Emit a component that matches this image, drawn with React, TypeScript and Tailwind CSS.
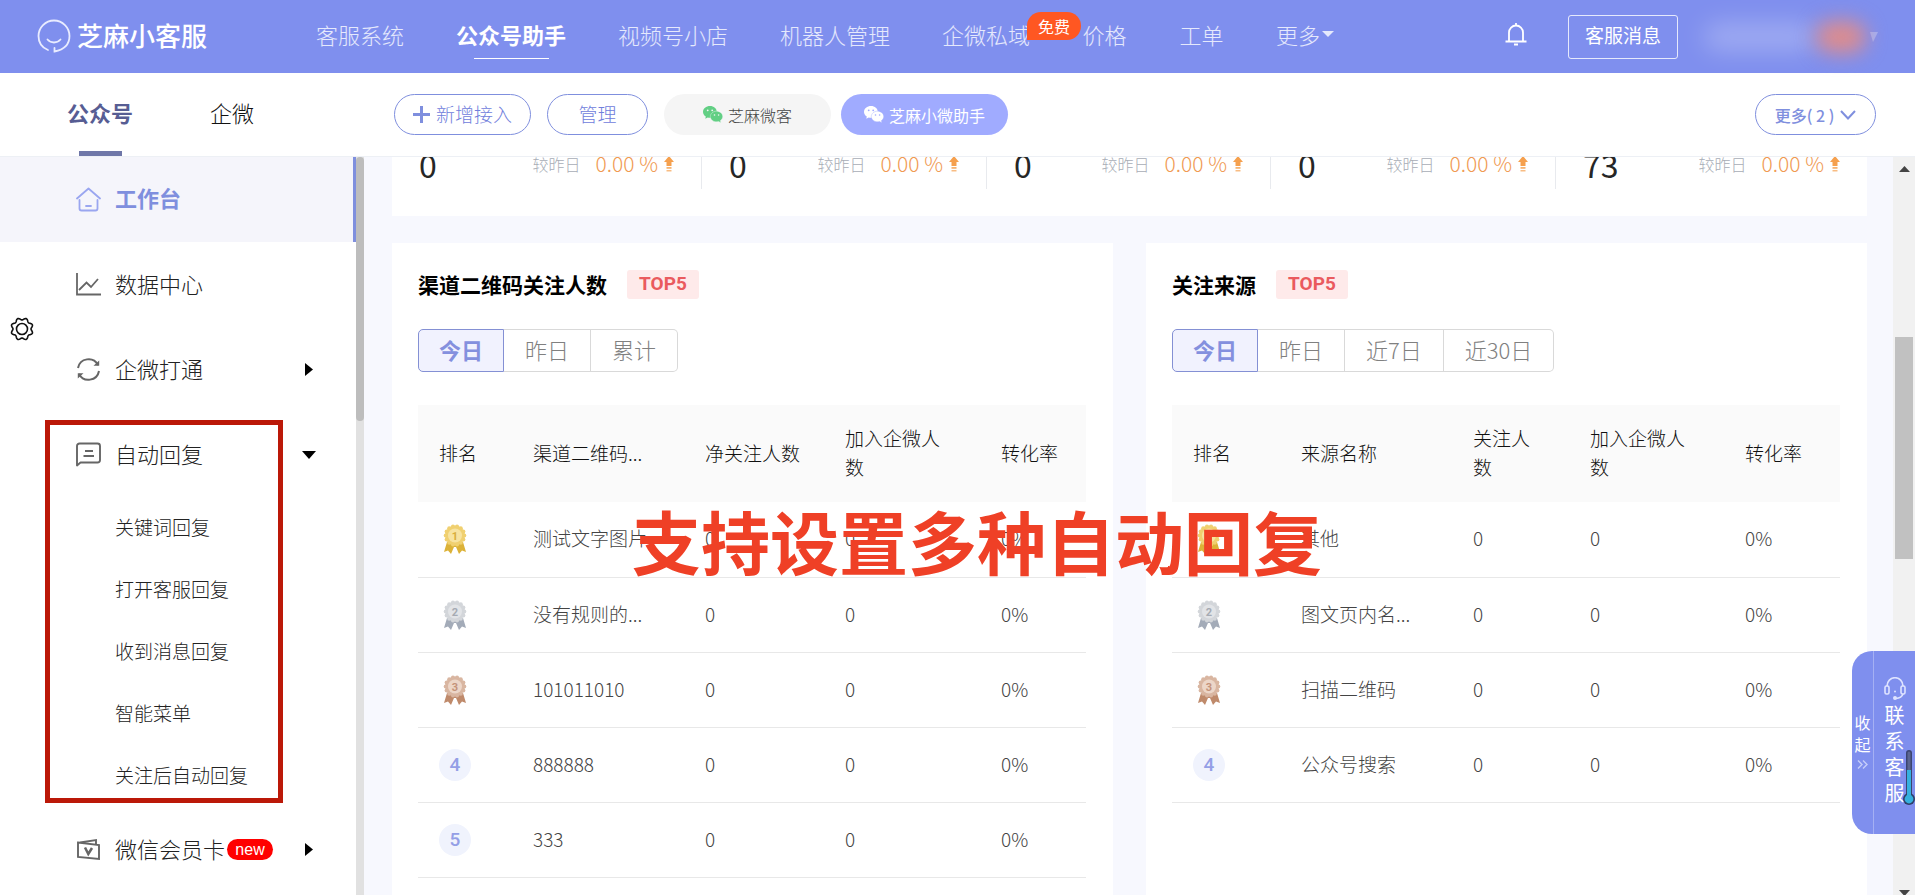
import type { ReactNode } from "react";
import clsx from "clsx";

type Row = { rank: number; name: string };

const NAV = [
  { label: "客服系统", width: "w-[140px]" },
  { label: "公众号助手", width: "w-[162px]", active: true },
  { label: "视频号小店", width: "w-[162px]" },
  { label: "机器人管理", width: "w-[162px]" },
  { label: "企微私域", width: "w-[140px]", badge: "免费" },
  { label: "价格", width: "w-[97px]" },
  { label: "工单", width: "w-[97px]" },
];

const REPLY_MENU = ["关键词回复", "打开客服回复", "收到消息回复", "智能菜单", "关注后自动回复"];

const STATS = ["0", "0", "0", "0", "73"];

const CHANNEL_ROWS: Row[] = [
  { rank: 1, name: "测试文字图片" },
  { rank: 2, name: "没有规则的..." },
  { rank: 3, name: "101011010" },
  { rank: 4, name: "888888" },
  { rank: 5, name: "333" },
];

const SOURCE_ROWS: Row[] = [
  { rank: 1, name: "其他" },
  { rank: 2, name: "图文页内名..." },
  { rank: 3, name: "扫描二维码" },
  { rank: 4, name: "公众号搜索" },
];

// rosette, inner disc, ribbon, digit
const MEDAL = [
  ["#f0d070", "#f7e3a0", "#dcb238", "#d8ae3c"],
  ["#d3d6da", "#e2e4e7", "#a3abb8", "#a6abb3"],
  ["#d9b6a1", "#ecd6c8", "#bf8a6b", "#c4937a"],
];

// eight rounded teeth, with a notch at the top
const GEAR_OUTLINE = Array.from({ length: 96 }, (_, i) => {
  const a = (i * Math.PI) / 48;
  const r = 10.1 - 1.1 * Math.cos(8 * a);
  return `${(12 + r * Math.cos(a)).toFixed(2)},${(12 + r * Math.sin(a)).toFixed(2)}`;
}).join(" ");

function LogoIcon() {
  return (
    <svg width="34" height="34" viewBox="0 0 34 34" fill="none" stroke="#e9ecff" strokeWidth="1.8" strokeLinecap="round">
      <path d="M11 31C5 28.600 1.500 23.500 1.500 17a15.500 15.500 0 1 1 31 0c0 8-5 13.500-15 15.500v-3.500" />
      <path d="M10.500 20.500c3.500 4 9.500 4 13 0" />
    </svg>
  );
}

function BellIcon() {
  return (
    <svg width="22" height="23" viewBox="0 0 22 23" fill="none" stroke="#fff" strokeWidth="1.8">
      <path d="M4 18.500V9.500a7 7 0 0 1 14 0v9M0.500 18.500h21M11 0v2.500M9 21.500h4" />
    </svg>
  );
}

function HomeIcon() {
  return (
    <svg width="25" height="25" viewBox="0 0 25 25" fill="none" stroke="#9aa6f0" strokeWidth="1.8" strokeLinecap="round" strokeLinejoin="round">
      <path d="M1 11.500 12.500 1.500 24 11.500M3.500 13v8.500a2 2 0 0 0 2 2h14a2 2 0 0 0 2-2V13M10 19h5" />
    </svg>
  );
}

function ChartIcon() {
  return (
    <svg width="25" height="23" viewBox="0 0 25 23" fill="none" stroke="#666" strokeWidth="1.8">
      <path d="M1 0v21.500h24M3 17l7.500-7.500 4.500 4.500 7-8" />
    </svg>
  );
}

function SyncIcon() {
  return (
    <svg width="25" height="25" viewBox="0 0 25 25" fill="none" stroke="#666" strokeWidth="2">
      <path d="M2 11A10.700 10.700 0 0 1 22 8M23 14a10.700 10.700 0 0 1-20 3" />
      <path d="M17.500 8.800h5.700V3.500zM7.500 16.200H1.800v5.300z" fill="#666" stroke="none" />
    </svg>
  );
}

function ChatIcon() {
  return (
    <svg width="25" height="25" viewBox="0 0 25 25" fill="none" stroke="#666" strokeWidth="1.9" strokeLinejoin="round">
      <path d="M1 23.500V4a2.500 2.500 0 0 1 2.500-2.500h18A2.500 2.500 0 0 1 24 4v14a2.500 2.500 0 0 1-2.500 2.500h-17zM9 9h8M7.500 14h10.500" />
    </svg>
  );
}

function CardIcon() {
  return (
    <svg width="25" height="23" viewBox="0 0 25 23" fill="none" stroke="#666" strokeWidth="1.9">
      <path d="M2 4.500 23 7v14L2 19zM4 4.500 20 2v4" />
      <path d="m9 9.500 3.300 6.500L16 10" strokeWidth="2.500" />
    </svg>
  );
}

function GearIcon() {
  return (
    <svg width="24" height="24" viewBox="0 0 24 24" fill="none" stroke="#111" strokeWidth="1.6" strokeLinejoin="round">
      <polygon points={GEAR_OUTLINE} />
      <circle cx="12" cy="12" r="5.500" />
    </svg>
  );
}

function WechatIcon({ color, eye }: { color: string; eye: string }) {
  return (
    <svg width="20" height="17" viewBox="0 0 20 17">
      <path d="M7 0c3.800 0 6.800 2.600 6.800 5.900 0 3.200-3 5.800-6.800 5.800-.8 0-1.600-.1-2.300-.3L2.300 12.800l.5-2.300C1.100 9.400 0 7.800 0 5.900 0 2.600 3.200 0 7 0z" fill={color} />
      <path d="M13.500 5.200c3.400 0 6.200 2.400 6.200 5.300 0 1.700-.9 3.100-2.300 4.100l.4 2.100-2.200-1.200c-.7.200-1.400.3-2.100.3-3.400 0-6.200-2.400-6.200-5.300s2.800-5.300 6.200-5.300z" fill={color} stroke={eye} strokeWidth=".4" />
      <g fill={eye}>
        <circle cx="4.700" cy="4.300" r=".9" />
        <circle cx="9.200" cy="4.300" r=".9" />
        <circle cx="11.500" cy="9" r=".8" />
        <circle cx="15.600" cy="9" r=".8" />
      </g>
    </svg>
  );
}

function TrendIcon() {
  return (
    <svg width="10" height="16" viewBox="0 0 10 16" fill="#f5a04e">
      <path d="M5 0 10 6H7.500v4h-5V6H0z" />
      <path d="M2.500 11h5v1.800h-5z" opacity=".8" />
      <path d="M2.500 14h5v1.500h-5z" opacity=".7" />
    </svg>
  );
}

function HeadsetIcon() {
  return (
    <svg width="22" height="23" viewBox="0 0 22 23" fill="none" stroke="#dfe4ff" strokeWidth="1.6">
      <path d="M3 9a8 8.300 0 0 1 16 0M19 17c-1 3-3 4.200-7 4.500" />
      <rect x="1" y="9" width="4" height="8" rx="1.500" />
      <rect x="17" y="9" width="4" height="8" rx="1.500" />
      <circle cx="11" cy="21" r="1.200" fill="#dfe4ff" />
      <circle cx="11" cy="14.500" r="1" fill="#dfe4ff" stroke="none" />
    </svg>
  );
}

function Thermometer() {
  return (
    <svg width="12" height="56" viewBox="0 0 12 56">
      <rect x="3" y="0" width="6" height="48" rx="3" fill="#3b4470" />
      <rect x="4.500" y="1.500" width="3" height="20" rx="1.500" fill="#5c6690" />
      <circle cx="6" cy="49" r="6" fill="#2f3f68" />
      <rect x="4" y="20" width="4" height="28" fill="#35b0de" />
      <circle cx="6" cy="49" r="4.400" fill="#35b0de" />
    </svg>
  );
}

function Rank({ n }: { n: number }) {
  if (n > 3) {
    return (
      <span className="flex size-8 items-center justify-center rounded-full bg-[#f0f3fd] font-[Roboto] text-[19px] font-medium text-[#949fe6]">
        {n}
      </span>
    );
  }
  const [outer, inner, ribbon, digit] = MEDAL[n - 1];
  const petals = Array.from({ length: 14 }, (_, i) => (i * Math.PI) / 7);
  return (
    <span className="flex w-8 justify-center">
      <svg width="24" height="30" viewBox="0 0 24 30">
        <path d="M4 18 1 28l4-1.500L8 30l3-7h2l3 7 3-3.500 4 1.500-3-10z" fill={ribbon} />
        <g fill={outer}>
          <circle cx="12" cy="11.500" r="10" />
          {petals.map((a) => (
            <circle key={a} cx={12 + 9.300 * Math.cos(a)} cy={11.5 + 9.300 * Math.sin(a)} r="2" />
          ))}
        </g>
        <circle cx="12" cy="11.500" r="7" fill={inner} />
        <text x="12" y="15.500" textAnchor="middle" fontFamily="Roboto, sans-serif" fontSize="11" fontWeight="700" fill={digit}>
          {n}
        </text>
      </svg>
    </span>
  );
}

function Caret({ down }: { down?: boolean }) {
  return (
    <span className="ml-auto flex w-[14px] justify-center">
      {down ? (
        <svg width="14" height="8" viewBox="0 0 14 8"><path d="M0 0h14L7 8z" /></svg>
      ) : (
        <svg width="8" height="13" viewBox="0 0 8 13"><path d="M0 0v13l8-6.500z" /></svg>
      )}
    </span>
  );
}

function MenuItem({ icon, label, children }: { icon: ReactNode; label: string; children?: ReactNode }) {
  return (
    <a href="#" className="flex h-[85px] items-center pr-[40px] pl-[76px] text-[22px] text-[#222]">
      <span className="mr-[14px] flex w-[25px] justify-center">{icon}</span>
      <span className="pb-[3px]">{label}</span>
      {children}
    </a>
  );
}

function TopCard({
  title,
  ranges,
  cols,
  heads,
  rows,
}: {
  title: string;
  ranges: string[];
  cols: string[];
  heads: string[];
  rows: Row[];
}) {
  return (
    <section className="min-w-0 flex-1 bg-white pt-[27px] pr-[27px] pl-[26px]">
      <div className="flex h-[29px] items-center gap-5">
        <h2 className="text-[21px] font-bold text-black">{title}</h2>
        <span className="flex h-[29px] w-[72px] items-center justify-center rounded-[3px] bg-[#feeaea] font-[Roboto] text-[19px] font-bold text-[#ea5a5e]">
          TOP5
        </span>
      </div>

      <div className="mt-[30px] flex">
        {ranges.map((r, i) => (
          <button
            key={r}
            type="button"
            className={clsx(
              "h-[43px] border pb-[2px] text-[22px] whitespace-nowrap first:rounded-l-[5px] last:rounded-r-[5px]",
              i === 0
                ? "border-[#8490d4] bg-[#f1f2fe] px-5 font-bold text-[#8490de]"
                : "border-l-0 border-[#d9d9d9] bg-white px-[21px] text-[#808080]",
            )}
          >
            {r}
          </button>
        ))}
      </div>

      <table className="mt-[33px] w-full table-fixed text-left text-[19px] leading-[29px]">
        <colgroup>
          {cols.map((c, i) => (
            <col key={i} className={c} />
          ))}
        </colgroup>
        <thead>
          <tr className="h-[97px] bg-[#fafafa] text-[#111]">
            {heads.map((h) => (
              <th key={h} className="pb-[3px] pl-[21px] font-light">
                {/* long heads break before their last character */}
                <div className={clsx(h === "加入企微人数" && "w-[100px]", h === "关注人数" && "w-[60px]")}>{h}</div>
              </th>
            ))}
          </tr>
        </thead>
        <tbody>
          {rows.map((r) => (
            <tr key={r.rank} className="h-[75px] border-b border-[#e8e8e8] text-[#444]">
              <td className="pl-[21px]"><Rank n={r.rank} /></td>
              <td className="pb-[3px] pl-[21px] whitespace-nowrap">{r.name}</td>
              <td className="pb-[3px] pl-[21px]">0</td>
              <td className="pb-[3px] pl-[21px]">0</td>
              <td className="pb-[3px] pl-[21px]">0%</td>
            </tr>
          ))}
        </tbody>
      </table>
    </section>
  );
}

export default function App() {
  return (
    <div className="relative flex h-screen flex-col overflow-hidden bg-white font-['Noto_Sans_CJK_SC',sans-serif] font-light">
      <header className="flex h-[73px] shrink-0 items-center bg-[#7f8fee] text-white">
        <a href="#" className="flex w-[290px] shrink-0 items-center gap-[6px] pb-[2px] pl-[37px] text-[26px] font-medium">
          <LogoIcon />
          <span className="pb-[2px]">芝麻小客服</span>
        </a>
        <nav className="flex h-full text-[22px] whitespace-nowrap">
          {NAV.map((n) => (
            <a
              key={n.label}
              href="#"
              className={clsx(
                "relative flex items-center justify-center pb-[5px]",
                n.width,
                n.active ? "font-bold text-white" : "text-white/80",
              )}
            >
              {n.label}
              {n.active && <span className="absolute bottom-[14px] h-px w-[75px] bg-white" />}
              {n.badge && (
                <span className="absolute top-3 left-[111px] z-10 flex h-7 w-[54px] items-center justify-center rounded-[14px] rounded-bl-none bg-[#ff5722] text-base font-normal text-white">
                  {n.badge}
                </span>
              )}
            </a>
          ))}
          <button type="button" className="flex items-center gap-[2px] pb-[5px] pl-[26px] text-white/80">
            更多
            <svg width="12" height="6" viewBox="0 0 12 6" fill="#e5e9fc"><path d="M0 0h12L6 6z" /></svg>
          </button>
        </nav>
        <div className="mr-[36px] ml-auto flex items-center">
          <button type="button" aria-label="通知" className="pb-[5px]"><BellIcon /></button>
          <button type="button" className="ml-[41px] h-[44px] w-[110px] rounded-[3px] border border-white/80 pb-[3px] text-[19px] font-normal">
            客服消息
          </button>
          <div className="ml-[26px] flex w-[175px] items-center">
            <span className="h-7 w-[112px] rounded-full bg-white/25 blur-[12px]" />
            <span className="h-8 w-[50px] rounded-full bg-[#de8c8c] blur-[10px]" />
            <svg className="ml-[4px]" width="8" height="11" viewBox="0 0 8 11" fill="#a3aff3"><path d="M0 1h8L3 11z" /></svg>
          </div>
        </div>
      </header>

      <div className="flex h-[84px] shrink-0 items-center border-b border-[#edf0f5]">
        <div className="flex h-full w-[394px] shrink-0 pl-[67px] text-[22px]">
          <a href="#" className="relative flex items-center pb-1 font-bold text-[#575d93]">
            公众号
            <span className="absolute bottom-0 left-3 h-[5px] w-[43px] bg-[#6f77a8]" />
          </a>
          <a href="#" className="ml-[77px] flex items-center pb-1 text-[#111]">企微</a>
        </div>
        <button type="button" className="flex h-[41px] w-[137px] items-center justify-center gap-[6px] rounded-full border border-[#7f8fde] pb-px text-[19px] text-[#7080dc]">
          <svg width="17" height="17" viewBox="0 0 17 17" stroke="#7f8fde" strokeWidth="3"><path d="M8.500 0v17M0 8.500h17" /></svg>
          新增接入
        </button>
        <button type="button" className="ml-4 h-[41px] w-[101px] rounded-full border border-[#7f8fde] pb-px text-[19px] text-[#7080dc]">
          管理
        </button>
        <button type="button" className="ml-4 flex h-[41px] w-[167px] items-center justify-center gap-[5px] rounded-full bg-[#f5f5f5] text-base text-[#444]">
          <WechatIcon color="#62cf84" eye="#f5f5f5" />
          芝麻微客
        </button>
        <button type="button" className="ml-[10px] flex h-[41px] w-[167px] items-center justify-center gap-[5px] rounded-full bg-[#a0abff] text-base font-normal text-white">
          <WechatIcon color="#fff" eye="#a0abff" />
          芝麻小微助手
        </button>
        <button type="button" className="mr-[39px] ml-auto flex h-[41px] w-[121px] items-center justify-center gap-[6px] rounded-full border border-[#7f8fde] text-base font-medium text-[#7f8fde]">
          更多( 2 )
          <svg width="16" height="10" viewBox="0 0 16 10" fill="none" stroke="#7f8fde" strokeWidth="2"><path d="m1 1 7 7.500L15 1" /></svg>
        </button>
      </div>

      <div className="flex min-h-0 flex-1">
        <aside className="flex w-[364px] shrink-0 overflow-hidden">
          <nav className="flex-1">
            <a href="#" className="flex h-[85px] items-center gap-[14px] border-r-[3px] border-[#7f8fde] bg-[#f5f5fb] pl-[76px] text-[22px] font-bold text-[#7f8fde]">
              <HomeIcon />
              <span className="pb-1">工作台</span>
            </a>
            <MenuItem icon={<ChartIcon />} label="数据中心" />
            <MenuItem icon={<SyncIcon />} label="企微打通"><Caret /></MenuItem>
            <MenuItem icon={<ChatIcon />} label="自动回复"><Caret down /></MenuItem>
            <ul className="text-[19px] text-[#222]">
              {REPLY_MENU.map((m) => (
                <li key={m}>
                  <a href="#" className="flex h-[62px] items-center pb-[2px] pl-[115px]">{m}</a>
                </li>
              ))}
            </ul>
            <MenuItem icon={<CardIcon />} label="微信会员卡">
              <span className="ml-[2px] flex h-[21px] w-[46px] shrink-0 items-center justify-center rounded-full bg-[#ff0000] font-['Liberation_Sans'] text-base font-normal text-white">
                new
              </span>
              <Caret />
            </MenuItem>
          </nav>
          <div className="w-2 bg-[#e1e1e1]">
            <div className="h-[264px] rounded-full bg-[#bdbdbd]" />
          </div>
        </aside>

        <main className="flex min-w-0 flex-1 flex-col overflow-hidden bg-[#f7f8fe] pr-[26px] pl-7">
          {/* today's counters, scrolled partly under the bar */}
          <div className="-mt-4 grid shrink-0 grid-cols-[310fr_285fr_284fr_285fr_311fr] bg-white pb-[27px]">
            {STATS.map((s, i) => (
              <div key={i} className="flex h-12 items-center border-r border-[#e8eaee] pr-[27px] pb-[2px] pl-[27px] last:border-r-0">
                <span className="text-[32px] font-normal text-[#262626]">{s}</span>
                <span className="mr-[15px] ml-auto text-base text-[#a8adb6]">较昨日</span>
                <span className="mr-[6px] text-[21px] text-[#f09a52]">0.00 %</span>
                <TrendIcon />
              </div>
            ))}
          </div>

          <div className="mt-[27px] flex flex-1 gap-[33px]">
            <TopCard
              title="渠道二维码关注人数"
              ranges={["今日", "昨日", "累计"]}
              cols={["w-[94px]", "w-[172px]", "w-[140px]", "w-[156px]", "w-[106px]"]}
              heads={["排名", "渠道二维码...", "净关注人数", "加入企微人数", "转化率"]}
              rows={CHANNEL_ROWS}
            />
            <TopCard
              title="关注来源"
              ranges={["今日", "昨日", "近7日", "近30日"]}
              cols={["w-[108px]", "w-[172px]", "w-[117px]", "w-[155px]", "w-[116px]"]}
              heads={["排名", "来源名称", "关注人数", "加入企微人数", "转化率"]}
              rows={SOURCE_ROWS}
            />
          </div>
        </main>

        <div className="flex w-[22px] shrink-0 flex-col items-center overflow-hidden bg-[#f1f1f1] pt-[9px]">
          <svg className="shrink-0" width="11" height="6" viewBox="0 0 11 6" fill="#444"><path d="M0 6h11L5.500 0z" /></svg>
          <div className="mt-[165px] h-[222px] w-[18px] shrink-0 bg-[#c1c1c1]" />
          <svg className="mt-auto shrink-0" width="11" height="5" viewBox="0 0 11 5" fill="#444"><path d="M0 0h11L6.500 5h-2z" /></svg>
        </div>
      </div>

      <button type="button" aria-label="设置" className="absolute top-[317px] left-[10px]"><GearIcon /></button>

      <div className="pointer-events-none absolute top-[420px] left-[45px] h-[383px] w-[238px] border-5 border-[#bb1808]" />

      <p className="pointer-events-none absolute inset-x-0 top-[502px] pl-[39px] text-center text-[69px] leading-[76px] font-bold text-[#ef4026]">
        支持设置多种自动回复
      </p>

      <div className="absolute top-[651px] right-0 flex h-[183px] w-[63px] rounded-l-[20px] bg-[#7f8fee] text-center text-white">
        <button type="button" className="flex w-[22px] flex-col items-center justify-center border-r border-white/30 pb-[6px] text-base leading-[22px] font-normal">
          <span>收</span>
          <span>起</span>
          <svg className="mt-[5px]" width="11" height="9" viewBox="0 0 11 9" fill="none" stroke="#c6cefa" strokeWidth="1.4"><path d="m1 0.500 4 4-4 4M6 0.500l4 4-4 4" /></svg>
        </button>
        <button type="button" className="flex flex-1 flex-col items-center pt-[26px] text-[20px] leading-[26px] font-normal">
          <HeadsetIcon />
          <span className="mt-[2px]">联</span>
          <span>系</span>
          <span>客</span>
          <span>服</span>
        </button>
      </div>
      <div className="absolute top-[750px] right-0"><Thermometer /></div>
    </div>
  );
}
